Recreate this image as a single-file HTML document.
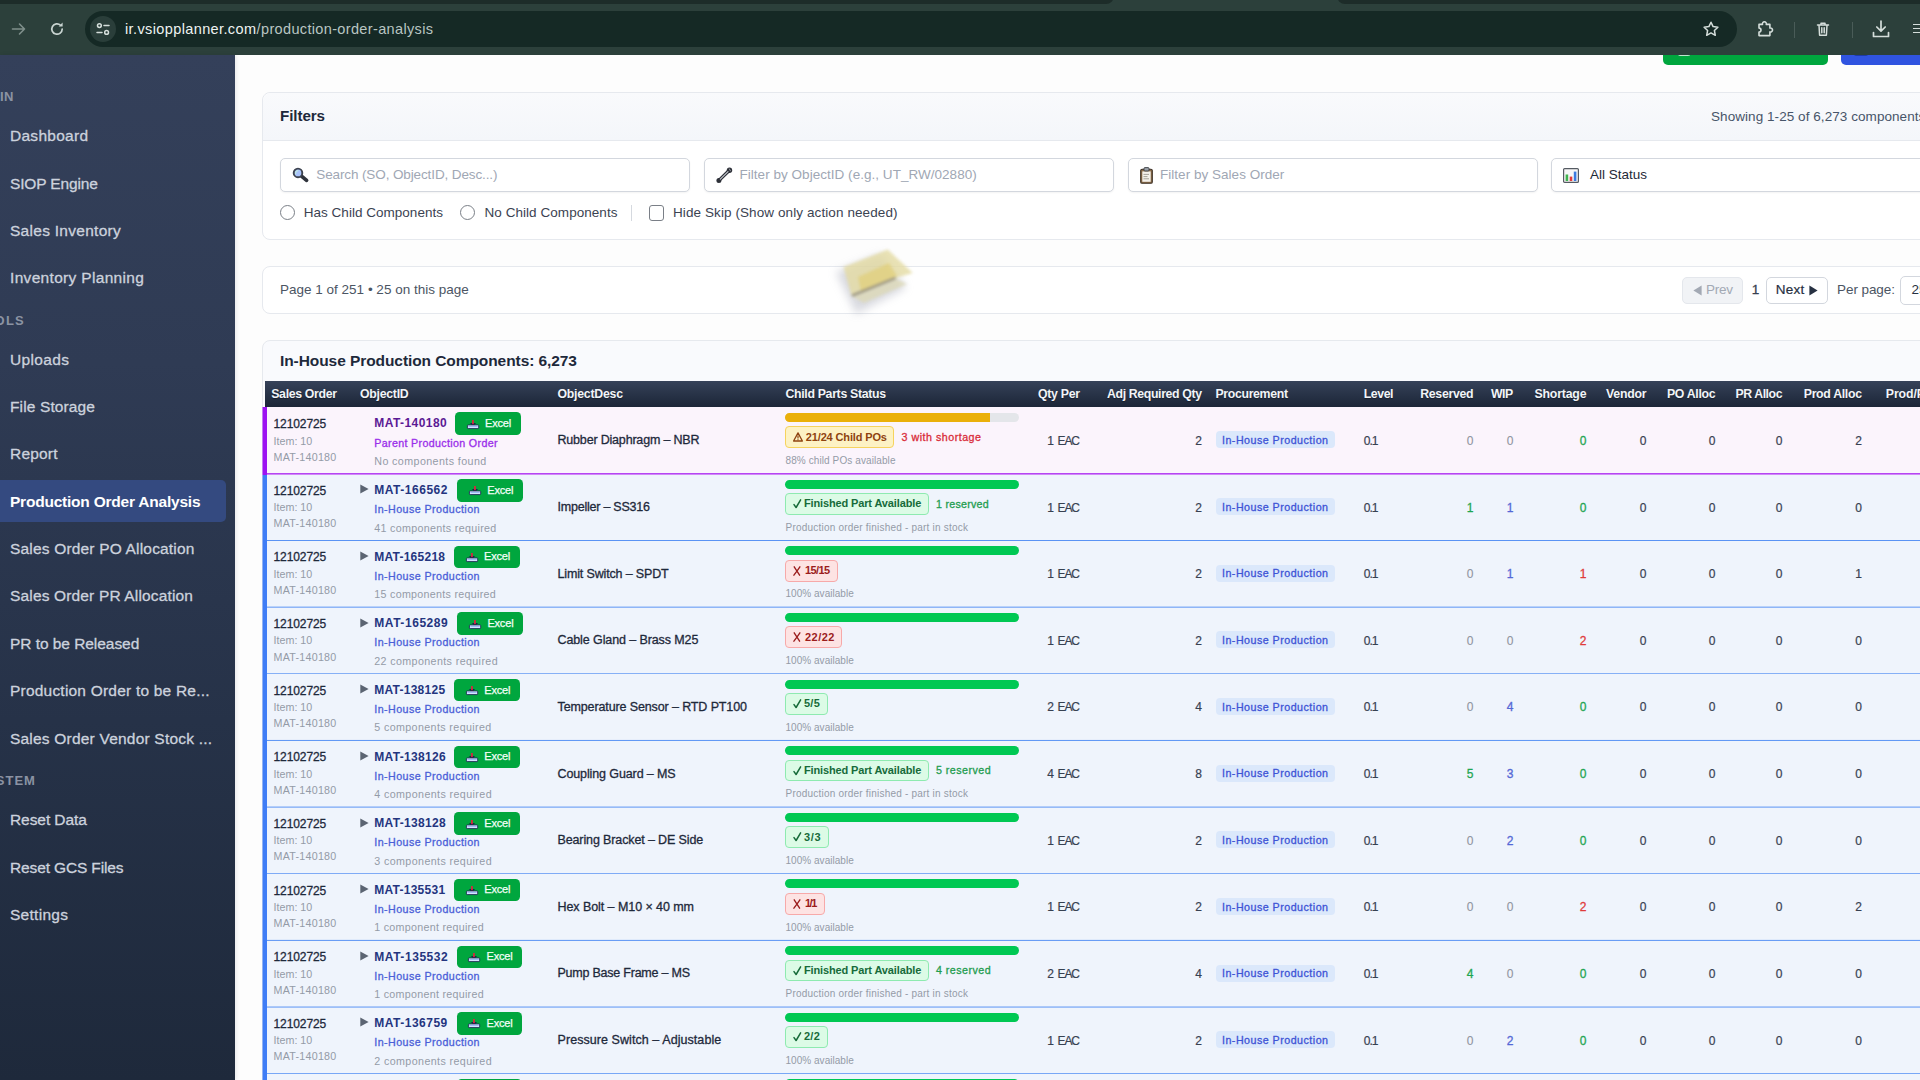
<!DOCTYPE html>
<html lang="en"><head><meta charset="utf-8"><title>Production Order Analysis</title>
<style>
html,body{margin:0;padding:0;width:1920px;height:1080px;overflow:hidden;}
body{position:relative;background:#fdfdfd;font-family:"Liberation Sans", sans-serif;}
#root{position:absolute;left:0;top:0;width:1920px;height:1080px;overflow:hidden;background:#fdfdfd;}
.t{position:absolute;white-space:pre;display:block;}
.b{position:absolute;box-sizing:border-box;}
svg{position:absolute;overflow:visible;}
</style></head>
<body>
<div id="root">
<div class="b" style="left:1663.00px;top:40.00px;width:164.75px;height:25.20px;background:#00a63e;border-radius:5px;"></div>
<div class="b" style="left:1840.75px;top:40.00px;width:100.00px;height:25.20px;background:#3054e0;border-radius:5px;"></div>
<div class="b" style="left:1677.50px;top:50.00px;width:12.50px;height:6.30px;background:rgba(255,255,255,.0);border:1.2px solid #bfe6cd;border-top:none;border-radius:0 0 2px 2px;"></div>
<div class="b" style="left:1854.00px;top:50.00px;width:14.00px;height:6.30px;background:#1d3aa8;border-radius:0 0 2px 2px;"></div>
<div class="b" style="left:0.00px;top:0.00px;width:1920.00px;height:54.50px;background:#2c403b;"></div>
<div class="b" style="left:-10.00px;top:-4.00px;width:1124.00px;height:7.50px;background:#1d2c29;border-radius:0 0 9px 9px;"></div>
<div class="b" style="left:1337.00px;top:-4.00px;width:600.00px;height:8.00px;background:#1d2c29;border-radius:0 0 0 9px;"></div>
<div class="b" style="left:85.00px;top:11.20px;width:1652.00px;height:35.80px;background:#152925;border-radius:18px;"></div>
<div class="b" style="left:90.00px;top:16.00px;width:26.00px;height:26.00px;background:#2a3e3a;border-radius:13px;"></div>
<svg style="left:11px;top:21px" width="16" height="16" viewBox="0 0 16 16"><path d="M1.5 8h12M8.5 3l5 5-5 5" fill="none" stroke="#7f8f8b" stroke-width="1.6" stroke-linecap="round" stroke-linejoin="round"/></svg>
<svg style="left:49px;top:21px" width="16" height="16" viewBox="0 0 16 16"><path d="M13.2 8a5.2 5.2 0 1 1-1.6-3.75" fill="none" stroke="#c9d4d1" stroke-width="1.7" stroke-linecap="round"/><path d="M13.6 1.6v4h-4z" fill="#c9d4d1"/></svg>
<svg style="left:96px;top:22px" width="14" height="14" viewBox="0 0 14 14"><g fill="none" stroke="#d5dedb" stroke-width="1.5" stroke-linecap="round"><circle cx="3.4" cy="3.6" r="1.9"/><path d="M8 3.6h5"/><circle cx="10.6" cy="10.4" r="1.9"/><path d="M1 10.4h5"/></g></svg>
<span class="t" style="left:125.00px;top:19.80px;font-size:14.5px;line-height:19px;color:#eef3f1;letter-spacing:0.382px;">ir.vsiopplanner.com</span>
<span class="t" style="left:256.60px;top:19.80px;font-size:14.5px;line-height:19px;color:#b9c5c2;letter-spacing:0.350px;">/production-order-analysis</span>
<svg style="left:1702px;top:20px" width="18" height="18" viewBox="0 0 18 18"><path d="M9 2.2l2.1 4.4 4.8.6-3.5 3.3.9 4.8L9 12.9l-4.3 2.4.9-4.8-3.5-3.3 4.8-.6z" fill="none" stroke="#d5dedb" stroke-width="1.5" stroke-linejoin="round"/></svg>
<svg style="left:1756.5px;top:18.5px" width="18" height="19" viewBox="0 0 18 19"><path d="M2 5.4h3.5a2 2 0 1 1 3.8 0h3.6v3.7a2 2 0 1 1 0 3.8v3.7H2v-3.5a2 2 0 1 0 0-4z" fill="none" stroke="#d5dedb" stroke-width="1.6" stroke-linejoin="round"/></svg>
<div class="b" style="left:1794.00px;top:21.50px;width:1.20px;height:16.00px;background:#4a5c58;"></div>
<svg style="left:1814px;top:20px" width="18" height="18" viewBox="0 0 18 18"><g fill="none" stroke="#d5dedb" stroke-width="1.5" stroke-linejoin="round" stroke-linecap="round"><path d="M3.5 5h11M7 5V3.2h4V5M5 5l.6 10.3h6.8L13 5"/><path d="M7.8 7.8v5M10.2 7.8v5"/></g></svg>
<div class="b" style="left:1852.00px;top:21.50px;width:1.20px;height:16.00px;background:#4a5c58;"></div>
<svg style="left:1872px;top:19px" width="18" height="20" viewBox="0 0 18 20"><g fill="none" stroke="#d5dedb" stroke-width="1.7" stroke-linejoin="round" stroke-linecap="round"><path d="M9 2v10M4.8 8l4.2 4.2L13.2 8"/><path d="M1.5 13.5v4h15v-4"/></g></svg>
<div class="b" style="left:1912.50px;top:23.50px;width:8.00px;height:1.60px;background:#d5dedb;"></div>
<div class="b" style="left:1912.50px;top:27.60px;width:8.00px;height:1.60px;background:#d5dedb;"></div>
<div class="b" style="left:1912.50px;top:31.70px;width:8.00px;height:1.60px;background:#d5dedb;"></div>
<div class="b" style="left:0.00px;top:54.50px;width:234.60px;height:1025.50px;background:linear-gradient(180deg,#34405a 0%,#2f3b54 30%,#263248 65%,#1e293b 100%);box-shadow:1px 0 4px rgba(15,23,42,.10);"></div>
<span class="t" style="left:0.10px;top:87.70px;font-size:13px;line-height:17px;color:#8b93a3;font-weight:700;letter-spacing:0.390px;">IN</span>
<span class="t" style="left:-5.50px;top:311.60px;font-size:13px;line-height:17px;color:#8b93a3;font-weight:700;letter-spacing:1.283px;">OLS</span>
<span class="t" style="left:-4.20px;top:771.80px;font-size:13px;line-height:17px;color:#8b93a3;font-weight:700;letter-spacing:0.992px;">STEM</span>
<div class="b" style="left:-6.00px;top:480.30px;width:231.50px;height:42.20px;background:#344a80;border-radius:5px;"></div>
<span class="t" style="left:10.00px;top:124.90px;font-size:15.5px;line-height:21px;color:#ccd2dd;letter-spacing:0.271px;-webkit-text-stroke:0.3px #ccd2dd;">Dashboard</span>
<span class="t" style="left:10.00px;top:172.50px;font-size:15.5px;line-height:21px;color:#ccd2dd;letter-spacing:-0.154px;-webkit-text-stroke:0.3px #ccd2dd;">SIOP Engine</span>
<span class="t" style="left:10.00px;top:219.90px;font-size:15.5px;line-height:21px;color:#ccd2dd;letter-spacing:0.283px;-webkit-text-stroke:0.3px #ccd2dd;">Sales Inventory</span>
<span class="t" style="left:10.00px;top:267.10px;font-size:15.5px;line-height:21px;color:#ccd2dd;letter-spacing:0.324px;-webkit-text-stroke:0.3px #ccd2dd;">Inventory Planning</span>
<span class="t" style="left:10.00px;top:348.90px;font-size:15.5px;line-height:21px;color:#ccd2dd;letter-spacing:0.338px;-webkit-text-stroke:0.3px #ccd2dd;">Uploads</span>
<span class="t" style="left:10.00px;top:396.20px;font-size:15.5px;line-height:21px;color:#ccd2dd;letter-spacing:0.129px;-webkit-text-stroke:0.3px #ccd2dd;">File Storage</span>
<span class="t" style="left:10.00px;top:443.40px;font-size:15.5px;line-height:21px;color:#ccd2dd;letter-spacing:0.194px;-webkit-text-stroke:0.3px #ccd2dd;">Report</span>
<span class="t" style="left:10.00px;top:537.80px;font-size:15.5px;line-height:21px;color:#ccd2dd;letter-spacing:0.181px;-webkit-text-stroke:0.3px #ccd2dd;">Sales Order PO Allocation</span>
<span class="t" style="left:10.00px;top:585.00px;font-size:15.5px;line-height:21px;color:#ccd2dd;letter-spacing:0.158px;-webkit-text-stroke:0.3px #ccd2dd;">Sales Order PR Allocation</span>
<span class="t" style="left:10.00px;top:632.90px;font-size:15.5px;line-height:21px;color:#ccd2dd;letter-spacing:-0.051px;-webkit-text-stroke:0.3px #ccd2dd;">PR to be Released</span>
<span class="t" style="left:10.00px;top:680.20px;font-size:15.5px;line-height:21px;color:#ccd2dd;letter-spacing:0.209px;-webkit-text-stroke:0.3px #ccd2dd;">Production Order to be Re...</span>
<span class="t" style="left:10.00px;top:727.50px;font-size:15.5px;line-height:21px;color:#ccd2dd;letter-spacing:0.206px;-webkit-text-stroke:0.3px #ccd2dd;">Sales Order Vendor Stock ...</span>
<span class="t" style="left:10.00px;top:808.80px;font-size:15.5px;line-height:21px;color:#ccd2dd;letter-spacing:-0.072px;-webkit-text-stroke:0.3px #ccd2dd;">Reset Data</span>
<span class="t" style="left:10.00px;top:856.50px;font-size:15.5px;line-height:21px;color:#ccd2dd;letter-spacing:-0.137px;-webkit-text-stroke:0.3px #ccd2dd;">Reset GCS Files</span>
<span class="t" style="left:10.00px;top:903.80px;font-size:15.5px;line-height:21px;color:#ccd2dd;letter-spacing:0.283px;-webkit-text-stroke:0.3px #ccd2dd;">Settings</span>
<span class="t" style="left:10.00px;top:490.50px;font-size:15.5px;line-height:21px;color:#ffffff;font-weight:700;letter-spacing:-0.221px;">Production Order Analysis</span>
<div class="b" style="left:262.00px;top:91.60px;width:1700.00px;height:148.20px;background:#ffffff;border:1px solid #e6e9ee;border-radius:8px;"></div>
<div class="b" style="left:263.00px;top:92.60px;width:1700.00px;height:48.00px;background:linear-gradient(180deg,#f9fafc,#f4f6fa);border-bottom:1px solid #e6e9ee;border-radius:8px 0 0 0;"></div>
<span class="t" style="left:280.00px;top:106.40px;font-size:15.2px;line-height:20px;color:#1e293b;font-weight:700;letter-spacing:-0.096px;">Filters</span>
<span class="t" style="left:1711.00px;top:107.50px;font-size:13.5px;line-height:18px;color:#475569;letter-spacing:0.061px;">Showing 1-25 of 6,273 components</span>
<div class="b" style="left:280.00px;top:158.00px;width:410.30px;height:33.70px;background:#ffffff;border:1px solid #d3d7de;border-radius:5px;box-shadow:0 1px 2px rgba(0,0,0,.05);"></div>
<div class="b" style="left:704.00px;top:158.00px;width:410.30px;height:33.70px;background:#ffffff;border:1px solid #d3d7de;border-radius:5px;box-shadow:0 1px 2px rgba(0,0,0,.05);"></div>
<div class="b" style="left:1127.50px;top:158.00px;width:410.30px;height:33.70px;background:#ffffff;border:1px solid #d3d7de;border-radius:5px;box-shadow:0 1px 2px rgba(0,0,0,.05);"></div>
<div class="b" style="left:1550.50px;top:158.00px;width:420.00px;height:33.70px;background:#ffffff;border:1px solid #d3d7de;border-radius:5px;box-shadow:0 1px 2px rgba(0,0,0,.05);"></div>
<span class="t" style="left:316.25px;top:166.00px;font-size:13.5px;line-height:18px;color:#a0a7b4;letter-spacing:-0.114px;">Search (SO, ObjectID, Desc...)</span>
<span class="t" style="left:739.50px;top:166.00px;font-size:13.5px;line-height:18px;color:#a0a7b4;letter-spacing:0.031px;">Filter by ObjectID (e.g., UT_RW/02880)</span>
<span class="t" style="left:1160.00px;top:166.00px;font-size:13.5px;line-height:18px;color:#a0a7b4;letter-spacing:0.025px;">Filter by Sales Order</span>
<span class="t" style="left:1590.00px;top:166.20px;font-size:13.5px;line-height:18px;color:#1f2937;">All Status</span>
<svg style="left:291.5px;top:167px" width="17" height="16" viewBox="0 0 17 16"><path d="M9.2 8.8l5.4 4.6" stroke="#2f333c" stroke-width="3.7" stroke-linecap="round"/><circle cx="6" cy="5.9" r="4.3" fill="#a9c3fa" stroke="#3d434f" stroke-width="1.9"/><path d="M3.6 6.6a2.6 2.6 0 0 1 2.2-3" stroke="#bfe9e0" stroke-width="1.2" fill="none" stroke-linecap="round"/></svg>
<svg style="left:715.5px;top:167px" width="17" height="16" viewBox="0 0 17 16"><path d="M3 13.4L13.4 3.3" stroke="#2d3038" stroke-width="3.4" stroke-linecap="round"/><circle cx="13.5" cy="3.3" r="2.7" fill="#2d3038"/><circle cx="2.9" cy="13.4" r="2.5" fill="#2d3038"/><path d="M4.3 12.1L12 4.7" stroke="#c4c7cd" stroke-width="1.1" stroke-linecap="round"/><path d="M13.2 1.6l1.4 2.6" stroke="#9a9ea6" stroke-width="1"/></svg>
<svg style="left:1139.5px;top:166.5px" width="13" height="17" viewBox="0 0 13 17"><rect x="0.7" y="2.2" width="11.6" height="14.1" rx="1.4" fill="#8d6e4a" stroke="#3b2f25" stroke-width="1.1"/><rect x="2.3" y="4.4" width="8.4" height="10.4" fill="#f4f1ea"/><rect x="4" y="0.6" width="5" height="3.4" rx="0.9" fill="#9aa0a8" stroke="#3c3f44" stroke-width="0.9"/><path d="M3.5 7.4h5.5M3.5 9.6h4M3.5 11.8h5.5" stroke="#9c9890" stroke-width="0.9"/></svg>
<svg style="left:1562.5px;top:167.5px" width="16" height="15" viewBox="0 0 16 15"><rect x="0.6" y="0.6" width="14.8" height="13.8" rx="1" fill="#f7f7f7" stroke="#555a62" stroke-width="1.2"/><rect x="2.6" y="6.5" width="2.6" height="6.5" fill="#3fb34f"/><rect x="6.7" y="8.6" width="2.6" height="4.4" fill="#e23c3c"/><rect x="10.8" y="3.6" width="2.6" height="9.4" fill="#3b7be0"/></svg>
<div class="b" style="left:280.00px;top:205.25px;width:15.00px;height:15.00px;background:#ffffff;border:1.4px solid #7a7f87;border-radius:50%;"></div>
<span class="t" style="left:303.75px;top:203.75px;font-size:13.5px;line-height:18px;color:#3b4352;letter-spacing:0.022px;">Has Child Components</span>
<div class="b" style="left:460.25px;top:205.25px;width:15.00px;height:15.00px;background:#ffffff;border:1.4px solid #7a7f87;border-radius:50%;"></div>
<span class="t" style="left:484.50px;top:203.75px;font-size:13.5px;line-height:18px;color:#3b4352;letter-spacing:0.051px;">No Child Components</span>
<div class="b" style="left:630.60px;top:204.50px;width:1.20px;height:16.50px;background:#d5d9df;"></div>
<div class="b" style="left:648.75px;top:205.40px;width:15.20px;height:15.20px;background:#ffffff;border:1.4px solid #7a7f87;border-radius:3px;"></div>
<span class="t" style="left:673.00px;top:203.75px;font-size:13.5px;line-height:18px;color:#3b4352;letter-spacing:0.091px;">Hide Skip (Show only action needed)</span>
<div class="b" style="left:262.00px;top:266.00px;width:1700.00px;height:48.00px;background:#ffffff;border:1px solid #e6e9ee;border-radius:8px;"></div>
<span class="t" style="left:280.00px;top:281.00px;font-size:13.5px;line-height:18px;color:#4b5563;letter-spacing:0.004px;">Page 1 of 251 • 25 on this page</span>
<div class="b" style="left:1681.75px;top:276.50px;width:60.75px;height:27.60px;background:#f1f3f6;border:1px solid #e4e7ec;border-radius:5px;"></div>
<svg style="left:1692.5px;top:285px" width="9" height="11" viewBox="0 0 9 11"><path d="M8.6 0.6v9.8L0.4 5.5z" fill="#a3a9b4"/></svg>
<span class="t" style="left:1706.00px;top:281.20px;font-size:13.5px;line-height:18px;color:#a3a9b4;letter-spacing:-0.255px;">Prev</span>
<span class="t" style="left:1751.80px;top:281.20px;font-size:13.5px;line-height:18px;color:#374151;-webkit-text-stroke:0.3px #374151;">1</span>
<div class="b" style="left:1765.50px;top:276.50px;width:62.00px;height:27.60px;background:#ffffff;border:1px solid #d3d7de;border-radius:5px;"></div>
<span class="t" style="left:1775.75px;top:281.20px;font-size:13.5px;line-height:18px;color:#273142;letter-spacing:0.245px;-webkit-text-stroke:0.2px #273142;">Next</span>
<svg style="left:1808.5px;top:285px" width="9" height="11" viewBox="0 0 9 11"><path d="M0.4 0.6v9.8L8.6 5.5z" fill="#273142"/></svg>
<span class="t" style="left:1837.00px;top:281.20px;font-size:13.5px;line-height:18px;color:#4b5563;letter-spacing:-0.068px;">Per page:</span>
<div class="b" style="left:1900.00px;top:275.50px;width:60.00px;height:29.00px;background:#ffffff;border:1px solid #d3d7de;border-radius:5px;"></div>
<span class="t" style="left:1911.50px;top:281.20px;font-size:13.5px;line-height:18px;color:#273142;">25</span>
<div class="b" style="left:262.00px;top:340.00px;width:1700.00px;height:800.00px;background:linear-gradient(180deg,#f9fafd 0px,#f9fafd 41px,#fcfcfd 41px);border:1px solid #e6e9ee;border-radius:8px 0 0 0;"></div>
<span class="t" style="left:280.00px;top:349.70px;font-size:15.5px;line-height:21px;color:#1e293b;font-weight:700;letter-spacing:-0.075px;">In-House Production Components: 6,273</span>
<div class="b" style="left:265.00px;top:380.80px;width:1700.00px;height:26.60px;background:linear-gradient(180deg,#364259 0%,#273246 55%,#1c2638 100%);"></div>
<span class="t" style="left:271.25px;top:386.30px;font-size:12.3px;line-height:16px;color:#f1f4f8;font-weight:700;letter-spacing:-0.330px;text-shadow:0 1px 1px rgba(0,0,0,.35);">Sales Order</span>
<span class="t" style="left:360.00px;top:386.30px;font-size:12.3px;line-height:16px;color:#f1f4f8;font-weight:700;letter-spacing:-0.261px;text-shadow:0 1px 1px rgba(0,0,0,.35);">ObjectID</span>
<span class="t" style="left:557.50px;top:386.30px;font-size:12.3px;line-height:16px;color:#f1f4f8;font-weight:700;letter-spacing:-0.241px;text-shadow:0 1px 1px rgba(0,0,0,.35);">ObjectDesc</span>
<span class="t" style="left:785.50px;top:386.30px;font-size:12.3px;line-height:16px;color:#f1f4f8;font-weight:700;letter-spacing:-0.319px;text-shadow:0 1px 1px rgba(0,0,0,.35);">Child Parts Status</span>
<span class="t" style="left:1038.00px;top:386.30px;font-size:12.3px;line-height:16px;color:#f1f4f8;font-weight:700;letter-spacing:-0.292px;text-shadow:0 1px 1px rgba(0,0,0,.35);">Qty Per</span>
<span class="t" style="left:1107.00px;top:386.30px;font-size:12.3px;line-height:16px;color:#f1f4f8;font-weight:700;letter-spacing:-0.362px;text-shadow:0 1px 1px rgba(0,0,0,.35);">Adj Required Qty</span>
<span class="t" style="left:1215.50px;top:386.30px;font-size:12.3px;line-height:16px;color:#f1f4f8;font-weight:700;letter-spacing:-0.336px;text-shadow:0 1px 1px rgba(0,0,0,.35);">Procurement</span>
<span class="t" style="left:1363.75px;top:386.30px;font-size:12.3px;line-height:16px;color:#f1f4f8;font-weight:700;letter-spacing:-0.426px;text-shadow:0 1px 1px rgba(0,0,0,.35);">Level</span>
<span class="t" style="left:1420.25px;top:386.30px;font-size:12.3px;line-height:16px;color:#f1f4f8;font-weight:700;letter-spacing:-0.304px;text-shadow:0 1px 1px rgba(0,0,0,.35);">Reserved</span>
<span class="t" style="left:1491.00px;top:386.30px;font-size:12.3px;line-height:16px;color:#f1f4f8;font-weight:700;letter-spacing:-0.492px;text-shadow:0 1px 1px rgba(0,0,0,.35);">WIP</span>
<span class="t" style="left:1534.50px;top:386.30px;font-size:12.3px;line-height:16px;color:#f1f4f8;font-weight:700;letter-spacing:-0.185px;text-shadow:0 1px 1px rgba(0,0,0,.35);">Shortage</span>
<span class="t" style="left:1606.00px;top:386.30px;font-size:12.3px;line-height:16px;color:#f1f4f8;font-weight:700;letter-spacing:-0.237px;text-shadow:0 1px 1px rgba(0,0,0,.35);">Vendor</span>
<span class="t" style="left:1667.00px;top:386.30px;font-size:12.3px;line-height:16px;color:#f1f4f8;font-weight:700;letter-spacing:-0.328px;text-shadow:0 1px 1px rgba(0,0,0,.35);">PO Alloc</span>
<span class="t" style="left:1735.50px;top:386.30px;font-size:12.3px;line-height:16px;color:#f1f4f8;font-weight:700;letter-spacing:-0.444px;text-shadow:0 1px 1px rgba(0,0,0,.35);">PR Alloc</span>
<span class="t" style="left:1803.75px;top:386.30px;font-size:12.3px;line-height:16px;color:#f1f4f8;font-weight:700;letter-spacing:-0.311px;text-shadow:0 1px 1px rgba(0,0,0,.35);">Prod Alloc</span>
<span class="t" style="left:1885.75px;top:386.30px;font-size:12.3px;line-height:16px;color:#f1f4f8;font-weight:700;letter-spacing:-0.068px;text-shadow:0 1px 1px rgba(0,0,0,.35);">Prod/PR Alloc</span>
<div class="b" style="left:263.00px;top:407.33px;width:1700.00px;height:67.34px;background:#fbf4fc;"></div>
<div class="b" style="left:263.00px;top:407.33px;width:4.00px;height:67.34px;background:#9d12f2;"></div>
<div class="b" style="left:262.00px;top:407.33px;width:1.00px;height:67.34px;background:#9d12f2;opacity:.5;"></div>
<div class="b" style="left:267.00px;top:473.00px;width:1700.00px;height:1.00px;background:#b545f3;"></div>
<div class="b" style="left:267.00px;top:474.00px;width:1700.00px;height:1.00px;background:#b545f3;opacity:.62;"></div>
<span class="t" style="left:273.50px;top:416.00px;font-size:12px;line-height:16px;color:#1e293b;letter-spacing:-0.092px;-webkit-text-stroke:0.3px #1e293b;">12102725</span>
<span class="t" style="left:273.50px;top:433.50px;font-size:10.7px;line-height:14px;color:#949ba7;letter-spacing:0.025px;">Item: 10</span>
<span class="t" style="left:273.50px;top:449.55px;font-size:10.7px;line-height:14px;color:#949ba7;letter-spacing:0.260px;">MAT-140180</span>
<span class="t" style="left:374.25px;top:415.30px;font-size:12px;line-height:16px;color:#5b1a94;font-weight:700;letter-spacing:0.446px;">MAT-140180</span>
<div class="b" style="left:455.00px;top:412.35px;width:65.50px;height:22.35px;background:#00a63e;border-radius:4.5px;"></div>
<svg style="left:466.80px;top:419.60px" width="12.1" height="9.3" viewBox="0 0 13 10"><path d="M3.0 3.3h6.8L6.4 6.4z" fill="#18224e"/><rect x="5.45" y="0" width="1.9" height="4.7" fill="#d9263f"/><rect x="0.45" y="5.35" width="12.1" height="3.9" rx="0.8" fill="#d4e3ff" stroke="#18224e" stroke-width="0.9"/><rect x="1.6" y="6.3" width="9.8" height="1.2" fill="#9dbcf5"/></svg>
<span class="t" style="left:485.00px;top:415.90px;font-size:11px;line-height:15px;color:#f4fff8;letter-spacing:-0.177px;-webkit-text-stroke:0.25px #f4fff8;">Excel</span>
<span class="t" style="left:374.25px;top:435.50px;font-size:10.7px;line-height:14px;color:#9a2eea;letter-spacing:0.337px;-webkit-text-stroke:0.3px #9a2eea;">Parent Production Order</span>
<span class="t" style="left:374.25px;top:453.80px;font-size:10.7px;line-height:14px;color:#949ba7;letter-spacing:0.412px;">No components found</span>
<span class="t" style="left:557.50px;top:432.25px;font-size:12.5px;line-height:17px;color:#1e293b;letter-spacing:-0.186px;-webkit-text-stroke:0.3px #1e293b;">Rubber Diaphragm – NBR</span>
<div class="b" style="left:785.00px;top:412.90px;width:233.80px;height:9.00px;background:#e4e6ea;border-radius:4.5px;overflow:hidden;"><div style="width:87.7%;height:100%;background:#eab00a;"></div></div>
<div class="b" style="left:785.20px;top:426.30px;width:109.30px;height:21.90px;background:#fdf2c4;border:1px solid #f6d35e;border-radius:4px;"></div>
<svg style="left:793px;top:431.90px" width="10" height="10" viewBox="0 0 10 10"><path d="M5 0.9L9.4 9H0.6z" fill="none" stroke="#8f4310" stroke-width="1.3" stroke-linejoin="round"/><path d="M5 3.6v2.8M5 7.3v0.9" stroke="#8f4310" stroke-width="1.2"/></svg>
<span class="t" style="left:805.75px;top:429.60px;font-size:11px;line-height:15px;color:#8f4310;font-weight:700;letter-spacing:-0.136px;">21/24 Child POs</span>
<span class="t" style="left:901.50px;top:430.10px;font-size:10.7px;line-height:14px;color:#d92c3a;letter-spacing:0.501px;-webkit-text-stroke:0.3px #d92c3a;">3 with shortage</span>
<span class="t" style="left:785.50px;top:454.10px;font-size:10px;line-height:14px;color:#949ba7;letter-spacing:0.098px;">88% child POs available</span>
<span class="t" style="left:1057.50px;top:432.70px;font-size:12px;line-height:16px;color:#374151;letter-spacing:-1.094px;-webkit-text-stroke:0.2px #374151;">EAC</span>
<span class="t" style="left:1047.31px;top:432.70px;font-size:12px;line-height:16px;color:#374151;-webkit-text-stroke:0.2px #374151;">1</span>
<span class="t" style="left:1195.31px;top:432.70px;font-size:12px;line-height:16px;color:#374151;-webkit-text-stroke:0.2px #374151;">2</span>

<div class="b" style="left:1215.50px;top:431.30px;width:119.30px;height:17.20px;background:#dbe8fb;border-radius:4px;"></div>
<span class="t" style="left:1222.00px;top:433.10px;font-size:10.7px;line-height:14px;color:#3d53d6;letter-spacing:0.476px;-webkit-text-stroke:0.3px #3d53d6;">In-House Production</span>
<span class="t" style="left:1363.75px;top:432.70px;font-size:12px;line-height:16px;color:#374151;letter-spacing:-0.969px;-webkit-text-stroke:0.2px #374151;">0.1</span>
<span class="t" style="left:1466.81px;top:432.70px;font-size:12px;line-height:16px;color:#8f959f;-webkit-text-stroke:0.1px #8f959f;">0</span>
<span class="t" style="left:1506.81px;top:432.70px;font-size:12px;line-height:16px;color:#8f959f;-webkit-text-stroke:0.1px #8f959f;">0</span>
<span class="t" style="left:1579.81px;top:432.70px;font-size:12px;line-height:16px;color:#1fa653;-webkit-text-stroke:0.3px #1fa653;">0</span>
<span class="t" style="left:1639.81px;top:432.70px;font-size:12px;line-height:16px;color:#374151;-webkit-text-stroke:0.2px #374151;">0</span>
<span class="t" style="left:1708.81px;top:432.70px;font-size:12px;line-height:16px;color:#374151;-webkit-text-stroke:0.2px #374151;">0</span>
<span class="t" style="left:1775.81px;top:432.70px;font-size:12px;line-height:16px;color:#374151;-webkit-text-stroke:0.2px #374151;">0</span>
<span class="t" style="left:1855.31px;top:432.70px;font-size:12px;line-height:16px;color:#374151;-webkit-text-stroke:0.2px #374151;">2</span>
<div class="b" style="left:263.00px;top:474.67px;width:1700.00px;height:66.33px;background:#eff4fc;"></div>
<div class="b" style="left:263.00px;top:474.67px;width:4.00px;height:66.33px;background:#3f7df6;"></div>
<div class="b" style="left:262.00px;top:474.67px;width:1.00px;height:66.33px;background:#3f7df6;opacity:.5;"></div>
<div class="b" style="left:267.00px;top:540.00px;width:1700.00px;height:1.00px;background:#5a93f4;opacity:1.00;"></div>
<span class="t" style="left:273.50px;top:482.84px;font-size:12px;line-height:16px;color:#1e293b;letter-spacing:-0.092px;-webkit-text-stroke:0.3px #1e293b;">12102725</span>
<span class="t" style="left:273.50px;top:500.34px;font-size:10.7px;line-height:14px;color:#949ba7;letter-spacing:0.025px;">Item: 10</span>
<span class="t" style="left:273.50px;top:516.38px;font-size:10.7px;line-height:14px;color:#949ba7;letter-spacing:0.260px;">MAT-140180</span>
<svg style="left:360px;top:484.44px" width="9" height="10" viewBox="0 0 9 10"><path d="M0.3 0.4v9.2L8.6 5z" fill="#5b6472"/></svg>
<span class="t" style="left:374.25px;top:482.14px;font-size:12px;line-height:16px;color:#24357f;font-weight:700;letter-spacing:0.530px;">MAT-166562</span>
<div class="b" style="left:457.25px;top:479.19px;width:65.50px;height:22.35px;background:#00a63e;border-radius:4.5px;"></div>
<svg style="left:469.05px;top:486.44px" width="12.1" height="9.3" viewBox="0 0 13 10"><path d="M3.0 3.3h6.8L6.4 6.4z" fill="#18224e"/><rect x="5.45" y="0" width="1.9" height="4.7" fill="#d9263f"/><rect x="0.45" y="5.35" width="12.1" height="3.9" rx="0.8" fill="#d4e3ff" stroke="#18224e" stroke-width="0.9"/><rect x="1.6" y="6.3" width="9.8" height="1.2" fill="#9dbcf5"/></svg>
<span class="t" style="left:487.25px;top:482.74px;font-size:11px;line-height:15px;color:#f4fff8;letter-spacing:-0.177px;-webkit-text-stroke:0.25px #f4fff8;">Excel</span>
<span class="t" style="left:374.25px;top:502.34px;font-size:10.7px;line-height:14px;color:#4a5fd8;letter-spacing:0.434px;-webkit-text-stroke:0.3px #4a5fd8;">In-House Production</span>
<span class="t" style="left:374.25px;top:520.63px;font-size:10.7px;line-height:14px;color:#949ba7;letter-spacing:0.321px;">41 components required</span>
<span class="t" style="left:557.50px;top:499.09px;font-size:12.5px;line-height:17px;color:#1e293b;letter-spacing:-0.226px;-webkit-text-stroke:0.3px #1e293b;">Impeller – SS316</span>
<div class="b" style="left:785.00px;top:479.74px;width:233.80px;height:9.00px;background:#00c853;border-radius:4.5px;"></div>
<div class="b" style="left:785.20px;top:493.14px;width:144.30px;height:21.90px;background:#dcfbe6;border:1px solid #8eeab0;border-radius:4px;"></div>
<svg style="left:793px;top:499.34px" width="9" height="10" viewBox="0 0 9 10"><path d="M1 5.6l2.1 2.9L7.6 0.9" fill="none" stroke="#176b3a" stroke-width="1.5" stroke-linecap="round" stroke-linejoin="round"/></svg>
<span class="t" style="left:803.90px;top:496.44px;font-size:11px;line-height:15px;color:#176b3a;font-weight:700;letter-spacing:-0.129px;">Finished Part Available</span>
<span class="t" style="left:936.00px;top:496.94px;font-size:10.7px;line-height:14px;color:#1f9d50;letter-spacing:0.250px;-webkit-text-stroke:0.3px #1f9d50;">1 reserved</span>
<span class="t" style="left:785.50px;top:520.94px;font-size:10px;line-height:14px;color:#949ba7;letter-spacing:0.213px;">Production order finished - part in stock</span>
<span class="t" style="left:1057.50px;top:499.54px;font-size:12px;line-height:16px;color:#374151;letter-spacing:-1.094px;-webkit-text-stroke:0.2px #374151;">EAC</span>
<span class="t" style="left:1047.31px;top:499.54px;font-size:12px;line-height:16px;color:#374151;-webkit-text-stroke:0.2px #374151;">1</span>
<span class="t" style="left:1195.31px;top:499.54px;font-size:12px;line-height:16px;color:#374151;-webkit-text-stroke:0.2px #374151;">2</span>

<div class="b" style="left:1215.50px;top:498.14px;width:119.30px;height:17.20px;background:#dbe8fb;border-radius:4px;"></div>
<span class="t" style="left:1222.00px;top:499.94px;font-size:10.7px;line-height:14px;color:#3d53d6;letter-spacing:0.476px;-webkit-text-stroke:0.3px #3d53d6;">In-House Production</span>
<span class="t" style="left:1363.75px;top:499.54px;font-size:12px;line-height:16px;color:#374151;letter-spacing:-0.969px;-webkit-text-stroke:0.2px #374151;">0.1</span>
<span class="t" style="left:1466.81px;top:499.54px;font-size:12px;line-height:16px;color:#1fa653;-webkit-text-stroke:0.3px #1fa653;">1</span>
<span class="t" style="left:1506.81px;top:499.54px;font-size:12px;line-height:16px;color:#5468d6;-webkit-text-stroke:0.3px #5468d6;">1</span>
<span class="t" style="left:1579.81px;top:499.54px;font-size:12px;line-height:16px;color:#1fa653;-webkit-text-stroke:0.3px #1fa653;">0</span>
<span class="t" style="left:1639.81px;top:499.54px;font-size:12px;line-height:16px;color:#374151;-webkit-text-stroke:0.2px #374151;">0</span>
<span class="t" style="left:1708.81px;top:499.54px;font-size:12px;line-height:16px;color:#374151;-webkit-text-stroke:0.2px #374151;">0</span>
<span class="t" style="left:1775.81px;top:499.54px;font-size:12px;line-height:16px;color:#374151;-webkit-text-stroke:0.2px #374151;">0</span>
<span class="t" style="left:1855.31px;top:499.54px;font-size:12px;line-height:16px;color:#374151;-webkit-text-stroke:0.2px #374151;">0</span>
<div class="b" style="left:263.00px;top:541.00px;width:1700.00px;height:66.65px;background:#eff4fc;"></div>
<div class="b" style="left:263.00px;top:541.00px;width:4.00px;height:66.65px;background:#3f7df6;"></div>
<div class="b" style="left:262.00px;top:541.00px;width:1.00px;height:66.65px;background:#3f7df6;opacity:.5;"></div>
<div class="b" style="left:267.00px;top:606.00px;width:1700.00px;height:1.00px;background:#5a93f4;opacity:0.35;"></div>
<div class="b" style="left:267.00px;top:607.00px;width:1700.00px;height:1.00px;background:#5a93f4;opacity:0.65;"></div>
<span class="t" style="left:273.50px;top:549.33px;font-size:12px;line-height:16px;color:#1e293b;letter-spacing:-0.092px;-webkit-text-stroke:0.3px #1e293b;">12102725</span>
<span class="t" style="left:273.50px;top:566.83px;font-size:10.7px;line-height:14px;color:#949ba7;letter-spacing:0.025px;">Item: 10</span>
<span class="t" style="left:273.50px;top:582.88px;font-size:10.7px;line-height:14px;color:#949ba7;letter-spacing:0.260px;">MAT-140180</span>
<svg style="left:360px;top:550.93px" width="9" height="10" viewBox="0 0 9 10"><path d="M0.3 0.4v9.2L8.6 5z" fill="#5b6472"/></svg>
<span class="t" style="left:374.25px;top:548.62px;font-size:12px;line-height:16px;color:#24357f;font-weight:700;letter-spacing:0.252px;">MAT-165218</span>
<div class="b" style="left:454.00px;top:545.68px;width:65.50px;height:22.35px;background:#00a63e;border-radius:4.5px;"></div>
<svg style="left:465.80px;top:552.93px" width="12.1" height="9.3" viewBox="0 0 13 10"><path d="M3.0 3.3h6.8L6.4 6.4z" fill="#18224e"/><rect x="5.45" y="0" width="1.9" height="4.7" fill="#d9263f"/><rect x="0.45" y="5.35" width="12.1" height="3.9" rx="0.8" fill="#d4e3ff" stroke="#18224e" stroke-width="0.9"/><rect x="1.6" y="6.3" width="9.8" height="1.2" fill="#9dbcf5"/></svg>
<span class="t" style="left:484.00px;top:549.23px;font-size:11px;line-height:15px;color:#f4fff8;letter-spacing:-0.177px;-webkit-text-stroke:0.25px #f4fff8;">Excel</span>
<span class="t" style="left:374.25px;top:568.83px;font-size:10.7px;line-height:14px;color:#4a5fd8;letter-spacing:0.434px;-webkit-text-stroke:0.3px #4a5fd8;">In-House Production</span>
<span class="t" style="left:374.25px;top:587.12px;font-size:10.7px;line-height:14px;color:#949ba7;letter-spacing:0.297px;">15 components required</span>
<span class="t" style="left:557.50px;top:565.58px;font-size:12.5px;line-height:17px;color:#1e293b;letter-spacing:-0.148px;-webkit-text-stroke:0.3px #1e293b;">Limit Switch – SPDT</span>
<div class="b" style="left:785.00px;top:546.23px;width:233.80px;height:9.00px;background:#00c853;border-radius:4.5px;"></div>
<div class="b" style="left:785.20px;top:559.62px;width:52.55px;height:21.90px;background:#fde3e3;border:1px solid #f7a9a9;border-radius:4px;"></div>
<svg style="left:793.4px;top:565.83px" width="8" height="10" viewBox="0 0 8 10"><path d="M1.2 0.8L6.6 9.2M6.9 0.8C5 3.6 3 6.4 0.9 9.2" fill="none" stroke="#9b1c1c" stroke-width="1.35" stroke-linecap="round"/></svg>
<span class="t" style="left:805.00px;top:562.93px;font-size:11px;line-height:15px;color:#9b1c1c;font-weight:700;letter-spacing:-0.595px;">15/15</span>
<span class="t" style="left:785.50px;top:587.43px;font-size:10px;line-height:14px;color:#949ba7;letter-spacing:0.032px;">100% available</span>
<span class="t" style="left:1057.50px;top:566.03px;font-size:12px;line-height:16px;color:#374151;letter-spacing:-1.094px;-webkit-text-stroke:0.2px #374151;">EAC</span>
<span class="t" style="left:1047.31px;top:566.03px;font-size:12px;line-height:16px;color:#374151;-webkit-text-stroke:0.2px #374151;">1</span>
<span class="t" style="left:1195.31px;top:566.03px;font-size:12px;line-height:16px;color:#374151;-webkit-text-stroke:0.2px #374151;">2</span>

<div class="b" style="left:1215.50px;top:564.62px;width:119.30px;height:17.20px;background:#dbe8fb;border-radius:4px;"></div>
<span class="t" style="left:1222.00px;top:566.43px;font-size:10.7px;line-height:14px;color:#3d53d6;letter-spacing:0.476px;-webkit-text-stroke:0.3px #3d53d6;">In-House Production</span>
<span class="t" style="left:1363.75px;top:566.03px;font-size:12px;line-height:16px;color:#374151;letter-spacing:-0.969px;-webkit-text-stroke:0.2px #374151;">0.1</span>
<span class="t" style="left:1466.81px;top:566.03px;font-size:12px;line-height:16px;color:#8f959f;-webkit-text-stroke:0.1px #8f959f;">0</span>
<span class="t" style="left:1506.81px;top:566.03px;font-size:12px;line-height:16px;color:#5468d6;-webkit-text-stroke:0.3px #5468d6;">1</span>
<span class="t" style="left:1579.81px;top:566.03px;font-size:12px;line-height:16px;color:#e03b3b;-webkit-text-stroke:0.3px #e03b3b;">1</span>
<span class="t" style="left:1639.81px;top:566.03px;font-size:12px;line-height:16px;color:#374151;-webkit-text-stroke:0.2px #374151;">0</span>
<span class="t" style="left:1708.81px;top:566.03px;font-size:12px;line-height:16px;color:#374151;-webkit-text-stroke:0.2px #374151;">0</span>
<span class="t" style="left:1775.81px;top:566.03px;font-size:12px;line-height:16px;color:#374151;-webkit-text-stroke:0.2px #374151;">0</span>
<span class="t" style="left:1855.31px;top:566.03px;font-size:12px;line-height:16px;color:#374151;-webkit-text-stroke:0.2px #374151;">1</span>
<div class="b" style="left:263.00px;top:607.65px;width:1700.00px;height:66.65px;background:#eff4fc;"></div>
<div class="b" style="left:263.00px;top:607.65px;width:4.00px;height:66.65px;background:#3f7df6;"></div>
<div class="b" style="left:262.00px;top:607.65px;width:1.00px;height:66.65px;background:#3f7df6;opacity:.5;"></div>
<div class="b" style="left:267.00px;top:673.00px;width:1700.00px;height:1.00px;background:#5a93f4;opacity:0.70;"></div>
<div class="b" style="left:267.00px;top:674.00px;width:1700.00px;height:1.00px;background:#5a93f4;opacity:0.30;"></div>
<span class="t" style="left:273.50px;top:615.97px;font-size:12px;line-height:16px;color:#1e293b;letter-spacing:-0.092px;-webkit-text-stroke:0.3px #1e293b;">12102725</span>
<span class="t" style="left:273.50px;top:633.47px;font-size:10.7px;line-height:14px;color:#949ba7;letter-spacing:0.025px;">Item: 10</span>
<span class="t" style="left:273.50px;top:649.52px;font-size:10.7px;line-height:14px;color:#949ba7;letter-spacing:0.260px;">MAT-140180</span>
<svg style="left:360px;top:617.57px" width="9" height="10" viewBox="0 0 9 10"><path d="M0.3 0.4v9.2L8.6 5z" fill="#5b6472"/></svg>
<span class="t" style="left:374.25px;top:615.27px;font-size:12px;line-height:16px;color:#24357f;font-weight:700;letter-spacing:0.557px;">MAT-165289</span>
<div class="b" style="left:457.40px;top:612.32px;width:65.50px;height:22.35px;background:#00a63e;border-radius:4.5px;"></div>
<svg style="left:469.20px;top:619.57px" width="12.1" height="9.3" viewBox="0 0 13 10"><path d="M3.0 3.3h6.8L6.4 6.4z" fill="#18224e"/><rect x="5.45" y="0" width="1.9" height="4.7" fill="#d9263f"/><rect x="0.45" y="5.35" width="12.1" height="3.9" rx="0.8" fill="#d4e3ff" stroke="#18224e" stroke-width="0.9"/><rect x="1.6" y="6.3" width="9.8" height="1.2" fill="#9dbcf5"/></svg>
<span class="t" style="left:487.40px;top:615.87px;font-size:11px;line-height:15px;color:#f4fff8;letter-spacing:-0.177px;-webkit-text-stroke:0.25px #f4fff8;">Excel</span>
<span class="t" style="left:374.25px;top:635.47px;font-size:10.7px;line-height:14px;color:#4a5fd8;letter-spacing:0.434px;-webkit-text-stroke:0.3px #4a5fd8;">In-House Production</span>
<span class="t" style="left:374.25px;top:653.77px;font-size:10.7px;line-height:14px;color:#949ba7;letter-spacing:0.385px;">22 components required</span>
<span class="t" style="left:557.50px;top:632.22px;font-size:12.5px;line-height:17px;color:#1e293b;letter-spacing:-0.102px;-webkit-text-stroke:0.3px #1e293b;">Cable Gland – Brass M25</span>
<div class="b" style="left:785.00px;top:612.87px;width:233.80px;height:9.00px;background:#00c853;border-radius:4.5px;"></div>
<div class="b" style="left:785.20px;top:626.27px;width:56.80px;height:21.90px;background:#fde3e3;border:1px solid #f7a9a9;border-radius:4px;"></div>
<svg style="left:793.4px;top:632.47px" width="8" height="10" viewBox="0 0 8 10"><path d="M1.2 0.8L6.6 9.2M6.9 0.8C5 3.6 3 6.4 0.9 9.2" fill="none" stroke="#9b1c1c" stroke-width="1.35" stroke-linecap="round"/></svg>
<span class="t" style="left:805.00px;top:629.57px;font-size:11px;line-height:15px;color:#9b1c1c;font-weight:700;letter-spacing:0.467px;">22/22</span>
<span class="t" style="left:785.50px;top:654.07px;font-size:10px;line-height:14px;color:#949ba7;letter-spacing:0.032px;">100% available</span>
<span class="t" style="left:1057.50px;top:632.67px;font-size:12px;line-height:16px;color:#374151;letter-spacing:-1.094px;-webkit-text-stroke:0.2px #374151;">EAC</span>
<span class="t" style="left:1047.31px;top:632.67px;font-size:12px;line-height:16px;color:#374151;-webkit-text-stroke:0.2px #374151;">1</span>
<span class="t" style="left:1195.31px;top:632.67px;font-size:12px;line-height:16px;color:#374151;-webkit-text-stroke:0.2px #374151;">2</span>

<div class="b" style="left:1215.50px;top:631.27px;width:119.30px;height:17.20px;background:#dbe8fb;border-radius:4px;"></div>
<span class="t" style="left:1222.00px;top:633.07px;font-size:10.7px;line-height:14px;color:#3d53d6;letter-spacing:0.476px;-webkit-text-stroke:0.3px #3d53d6;">In-House Production</span>
<span class="t" style="left:1363.75px;top:632.67px;font-size:12px;line-height:16px;color:#374151;letter-spacing:-0.969px;-webkit-text-stroke:0.2px #374151;">0.1</span>
<span class="t" style="left:1466.81px;top:632.67px;font-size:12px;line-height:16px;color:#8f959f;-webkit-text-stroke:0.1px #8f959f;">0</span>
<span class="t" style="left:1506.81px;top:632.67px;font-size:12px;line-height:16px;color:#8f959f;-webkit-text-stroke:0.1px #8f959f;">0</span>
<span class="t" style="left:1579.81px;top:632.67px;font-size:12px;line-height:16px;color:#e03b3b;-webkit-text-stroke:0.3px #e03b3b;">2</span>
<span class="t" style="left:1639.81px;top:632.67px;font-size:12px;line-height:16px;color:#374151;-webkit-text-stroke:0.2px #374151;">0</span>
<span class="t" style="left:1708.81px;top:632.67px;font-size:12px;line-height:16px;color:#374151;-webkit-text-stroke:0.2px #374151;">0</span>
<span class="t" style="left:1775.81px;top:632.67px;font-size:12px;line-height:16px;color:#374151;-webkit-text-stroke:0.2px #374151;">0</span>
<span class="t" style="left:1855.31px;top:632.67px;font-size:12px;line-height:16px;color:#374151;-webkit-text-stroke:0.2px #374151;">0</span>
<div class="b" style="left:263.00px;top:674.30px;width:1700.00px;height:66.65px;background:#eff4fc;"></div>
<div class="b" style="left:263.00px;top:674.30px;width:4.00px;height:66.65px;background:#3f7df6;"></div>
<div class="b" style="left:262.00px;top:674.30px;width:1.00px;height:66.65px;background:#3f7df6;opacity:.5;"></div>
<div class="b" style="left:267.00px;top:739.00px;width:1700.00px;height:1.00px;background:#5a93f4;opacity:0.05;"></div>
<div class="b" style="left:267.00px;top:740.00px;width:1700.00px;height:1.00px;background:#5a93f4;opacity:0.95;"></div>
<span class="t" style="left:273.50px;top:682.62px;font-size:12px;line-height:16px;color:#1e293b;letter-spacing:-0.092px;-webkit-text-stroke:0.3px #1e293b;">12102725</span>
<span class="t" style="left:273.50px;top:700.12px;font-size:10.7px;line-height:14px;color:#949ba7;letter-spacing:0.025px;">Item: 10</span>
<span class="t" style="left:273.50px;top:716.17px;font-size:10.7px;line-height:14px;color:#949ba7;letter-spacing:0.260px;">MAT-140180</span>
<svg style="left:360px;top:684.23px" width="9" height="10" viewBox="0 0 9 10"><path d="M0.3 0.4v9.2L8.6 5z" fill="#5b6472"/></svg>
<span class="t" style="left:374.25px;top:681.92px;font-size:12px;line-height:16px;color:#24357f;font-weight:700;letter-spacing:0.263px;">MAT-138125</span>
<div class="b" style="left:454.30px;top:678.98px;width:65.50px;height:22.35px;background:#00a63e;border-radius:4.5px;"></div>
<svg style="left:466.10px;top:686.23px" width="12.1" height="9.3" viewBox="0 0 13 10"><path d="M3.0 3.3h6.8L6.4 6.4z" fill="#18224e"/><rect x="5.45" y="0" width="1.9" height="4.7" fill="#d9263f"/><rect x="0.45" y="5.35" width="12.1" height="3.9" rx="0.8" fill="#d4e3ff" stroke="#18224e" stroke-width="0.9"/><rect x="1.6" y="6.3" width="9.8" height="1.2" fill="#9dbcf5"/></svg>
<span class="t" style="left:484.30px;top:682.52px;font-size:11px;line-height:15px;color:#f4fff8;letter-spacing:-0.177px;-webkit-text-stroke:0.25px #f4fff8;">Excel</span>
<span class="t" style="left:374.25px;top:702.12px;font-size:10.7px;line-height:14px;color:#4a5fd8;letter-spacing:0.434px;-webkit-text-stroke:0.3px #4a5fd8;">In-House Production</span>
<span class="t" style="left:374.25px;top:720.42px;font-size:10.7px;line-height:14px;color:#949ba7;letter-spacing:0.386px;">5 components required</span>
<span class="t" style="left:557.50px;top:698.88px;font-size:12.5px;line-height:17px;color:#1e293b;letter-spacing:-0.118px;-webkit-text-stroke:0.3px #1e293b;">Temperature Sensor – RTD PT100</span>
<div class="b" style="left:785.00px;top:679.52px;width:233.80px;height:9.00px;background:#00c853;border-radius:4.5px;"></div>
<div class="b" style="left:785.20px;top:692.92px;width:42.80px;height:21.90px;background:#dcfbe6;border:1px solid #8eeab0;border-radius:4px;"></div>
<svg style="left:793px;top:699.12px" width="9" height="10" viewBox="0 0 9 10"><path d="M1 5.6l2.1 2.9L7.6 0.9" fill="none" stroke="#176b3a" stroke-width="1.5" stroke-linecap="round" stroke-linejoin="round"/></svg>
<span class="t" style="left:803.90px;top:696.23px;font-size:11px;line-height:15px;color:#176b3a;font-weight:700;letter-spacing:0.302px;">5/5</span>
<span class="t" style="left:785.50px;top:720.73px;font-size:10px;line-height:14px;color:#949ba7;letter-spacing:0.032px;">100% available</span>
<span class="t" style="left:1057.50px;top:699.33px;font-size:12px;line-height:16px;color:#374151;letter-spacing:-1.094px;-webkit-text-stroke:0.2px #374151;">EAC</span>
<span class="t" style="left:1047.31px;top:699.33px;font-size:12px;line-height:16px;color:#374151;-webkit-text-stroke:0.2px #374151;">2</span>
<span class="t" style="left:1195.31px;top:699.33px;font-size:12px;line-height:16px;color:#374151;-webkit-text-stroke:0.2px #374151;">4</span>

<div class="b" style="left:1215.50px;top:697.92px;width:119.30px;height:17.20px;background:#dbe8fb;border-radius:4px;"></div>
<span class="t" style="left:1222.00px;top:699.73px;font-size:10.7px;line-height:14px;color:#3d53d6;letter-spacing:0.476px;-webkit-text-stroke:0.3px #3d53d6;">In-House Production</span>
<span class="t" style="left:1363.75px;top:699.33px;font-size:12px;line-height:16px;color:#374151;letter-spacing:-0.969px;-webkit-text-stroke:0.2px #374151;">0.1</span>
<span class="t" style="left:1466.81px;top:699.33px;font-size:12px;line-height:16px;color:#8f959f;-webkit-text-stroke:0.1px #8f959f;">0</span>
<span class="t" style="left:1506.81px;top:699.33px;font-size:12px;line-height:16px;color:#5468d6;-webkit-text-stroke:0.3px #5468d6;">4</span>
<span class="t" style="left:1579.81px;top:699.33px;font-size:12px;line-height:16px;color:#1fa653;-webkit-text-stroke:0.3px #1fa653;">0</span>
<span class="t" style="left:1639.81px;top:699.33px;font-size:12px;line-height:16px;color:#374151;-webkit-text-stroke:0.2px #374151;">0</span>
<span class="t" style="left:1708.81px;top:699.33px;font-size:12px;line-height:16px;color:#374151;-webkit-text-stroke:0.2px #374151;">0</span>
<span class="t" style="left:1775.81px;top:699.33px;font-size:12px;line-height:16px;color:#374151;-webkit-text-stroke:0.2px #374151;">0</span>
<span class="t" style="left:1855.31px;top:699.33px;font-size:12px;line-height:16px;color:#374151;-webkit-text-stroke:0.2px #374151;">0</span>
<div class="b" style="left:263.00px;top:740.95px;width:1700.00px;height:66.65px;background:#eff4fc;"></div>
<div class="b" style="left:263.00px;top:740.95px;width:4.00px;height:66.65px;background:#3f7df6;"></div>
<div class="b" style="left:262.00px;top:740.95px;width:1.00px;height:66.65px;background:#3f7df6;opacity:.5;"></div>
<div class="b" style="left:267.00px;top:806.00px;width:1700.00px;height:1.00px;background:#5a93f4;opacity:0.40;"></div>
<div class="b" style="left:267.00px;top:807.00px;width:1700.00px;height:1.00px;background:#5a93f4;opacity:0.60;"></div>
<span class="t" style="left:273.50px;top:749.28px;font-size:12px;line-height:16px;color:#1e293b;letter-spacing:-0.092px;-webkit-text-stroke:0.3px #1e293b;">12102725</span>
<span class="t" style="left:273.50px;top:766.78px;font-size:10.7px;line-height:14px;color:#949ba7;letter-spacing:0.025px;">Item: 10</span>
<span class="t" style="left:273.50px;top:782.83px;font-size:10.7px;line-height:14px;color:#949ba7;letter-spacing:0.260px;">MAT-140180</span>
<svg style="left:360px;top:750.88px" width="9" height="10" viewBox="0 0 9 10"><path d="M0.3 0.4v9.2L8.6 5z" fill="#5b6472"/></svg>
<span class="t" style="left:374.25px;top:748.58px;font-size:12px;line-height:16px;color:#24357f;font-weight:700;letter-spacing:0.318px;">MAT-138126</span>
<div class="b" style="left:454.30px;top:745.63px;width:65.50px;height:22.35px;background:#00a63e;border-radius:4.5px;"></div>
<svg style="left:466.10px;top:752.88px" width="12.1" height="9.3" viewBox="0 0 13 10"><path d="M3.0 3.3h6.8L6.4 6.4z" fill="#18224e"/><rect x="5.45" y="0" width="1.9" height="4.7" fill="#d9263f"/><rect x="0.45" y="5.35" width="12.1" height="3.9" rx="0.8" fill="#d4e3ff" stroke="#18224e" stroke-width="0.9"/><rect x="1.6" y="6.3" width="9.8" height="1.2" fill="#9dbcf5"/></svg>
<span class="t" style="left:484.30px;top:749.18px;font-size:11px;line-height:15px;color:#f4fff8;letter-spacing:-0.177px;-webkit-text-stroke:0.25px #f4fff8;">Excel</span>
<span class="t" style="left:374.25px;top:768.78px;font-size:10.7px;line-height:14px;color:#4a5fd8;letter-spacing:0.434px;-webkit-text-stroke:0.3px #4a5fd8;">In-House Production</span>
<span class="t" style="left:374.25px;top:787.08px;font-size:10.7px;line-height:14px;color:#949ba7;letter-spacing:0.401px;">4 components required</span>
<span class="t" style="left:557.50px;top:765.53px;font-size:12.5px;line-height:17px;color:#1e293b;letter-spacing:-0.111px;-webkit-text-stroke:0.3px #1e293b;">Coupling Guard – MS</span>
<div class="b" style="left:785.00px;top:746.18px;width:233.80px;height:9.00px;background:#00c853;border-radius:4.5px;"></div>
<div class="b" style="left:785.20px;top:759.58px;width:144.30px;height:21.90px;background:#dcfbe6;border:1px solid #8eeab0;border-radius:4px;"></div>
<svg style="left:793px;top:765.78px" width="9" height="10" viewBox="0 0 9 10"><path d="M1 5.6l2.1 2.9L7.6 0.9" fill="none" stroke="#176b3a" stroke-width="1.5" stroke-linecap="round" stroke-linejoin="round"/></svg>
<span class="t" style="left:803.90px;top:762.88px;font-size:11px;line-height:15px;color:#176b3a;font-weight:700;letter-spacing:-0.129px;">Finished Part Available</span>
<span class="t" style="left:936.00px;top:763.38px;font-size:10.7px;line-height:14px;color:#1f9d50;letter-spacing:0.467px;-webkit-text-stroke:0.3px #1f9d50;">5 reserved</span>
<span class="t" style="left:785.50px;top:787.38px;font-size:10px;line-height:14px;color:#949ba7;letter-spacing:0.213px;">Production order finished - part in stock</span>
<span class="t" style="left:1057.50px;top:765.98px;font-size:12px;line-height:16px;color:#374151;letter-spacing:-1.094px;-webkit-text-stroke:0.2px #374151;">EAC</span>
<span class="t" style="left:1047.31px;top:765.98px;font-size:12px;line-height:16px;color:#374151;-webkit-text-stroke:0.2px #374151;">4</span>
<span class="t" style="left:1195.31px;top:765.98px;font-size:12px;line-height:16px;color:#374151;-webkit-text-stroke:0.2px #374151;">8</span>

<div class="b" style="left:1215.50px;top:764.58px;width:119.30px;height:17.20px;background:#dbe8fb;border-radius:4px;"></div>
<span class="t" style="left:1222.00px;top:766.38px;font-size:10.7px;line-height:14px;color:#3d53d6;letter-spacing:0.476px;-webkit-text-stroke:0.3px #3d53d6;">In-House Production</span>
<span class="t" style="left:1363.75px;top:765.98px;font-size:12px;line-height:16px;color:#374151;letter-spacing:-0.969px;-webkit-text-stroke:0.2px #374151;">0.1</span>
<span class="t" style="left:1466.81px;top:765.98px;font-size:12px;line-height:16px;color:#1fa653;-webkit-text-stroke:0.3px #1fa653;">5</span>
<span class="t" style="left:1506.81px;top:765.98px;font-size:12px;line-height:16px;color:#5468d6;-webkit-text-stroke:0.3px #5468d6;">3</span>
<span class="t" style="left:1579.81px;top:765.98px;font-size:12px;line-height:16px;color:#1fa653;-webkit-text-stroke:0.3px #1fa653;">0</span>
<span class="t" style="left:1639.81px;top:765.98px;font-size:12px;line-height:16px;color:#374151;-webkit-text-stroke:0.2px #374151;">0</span>
<span class="t" style="left:1708.81px;top:765.98px;font-size:12px;line-height:16px;color:#374151;-webkit-text-stroke:0.2px #374151;">0</span>
<span class="t" style="left:1775.81px;top:765.98px;font-size:12px;line-height:16px;color:#374151;-webkit-text-stroke:0.2px #374151;">0</span>
<span class="t" style="left:1855.31px;top:765.98px;font-size:12px;line-height:16px;color:#374151;-webkit-text-stroke:0.2px #374151;">0</span>
<div class="b" style="left:263.00px;top:807.60px;width:1700.00px;height:66.65px;background:#eff4fc;"></div>
<div class="b" style="left:263.00px;top:807.60px;width:4.00px;height:66.65px;background:#3f7df6;"></div>
<div class="b" style="left:262.00px;top:807.60px;width:1.00px;height:66.65px;background:#3f7df6;opacity:.5;"></div>
<div class="b" style="left:267.00px;top:873.00px;width:1700.00px;height:1.00px;background:#5a93f4;opacity:0.75;"></div>
<div class="b" style="left:267.00px;top:874.00px;width:1700.00px;height:1.00px;background:#5a93f4;opacity:0.25;"></div>
<span class="t" style="left:273.50px;top:815.92px;font-size:12px;line-height:16px;color:#1e293b;letter-spacing:-0.092px;-webkit-text-stroke:0.3px #1e293b;">12102725</span>
<span class="t" style="left:273.50px;top:833.42px;font-size:10.7px;line-height:14px;color:#949ba7;letter-spacing:0.025px;">Item: 10</span>
<span class="t" style="left:273.50px;top:849.47px;font-size:10.7px;line-height:14px;color:#949ba7;letter-spacing:0.260px;">MAT-140180</span>
<svg style="left:360px;top:817.52px" width="9" height="10" viewBox="0 0 9 10"><path d="M0.3 0.4v9.2L8.6 5z" fill="#5b6472"/></svg>
<span class="t" style="left:374.25px;top:815.22px;font-size:12px;line-height:16px;color:#24357f;font-weight:700;letter-spacing:0.318px;">MAT-138128</span>
<div class="b" style="left:454.30px;top:812.27px;width:65.50px;height:22.35px;background:#00a63e;border-radius:4.5px;"></div>
<svg style="left:466.10px;top:819.52px" width="12.1" height="9.3" viewBox="0 0 13 10"><path d="M3.0 3.3h6.8L6.4 6.4z" fill="#18224e"/><rect x="5.45" y="0" width="1.9" height="4.7" fill="#d9263f"/><rect x="0.45" y="5.35" width="12.1" height="3.9" rx="0.8" fill="#d4e3ff" stroke="#18224e" stroke-width="0.9"/><rect x="1.6" y="6.3" width="9.8" height="1.2" fill="#9dbcf5"/></svg>
<span class="t" style="left:484.30px;top:815.82px;font-size:11px;line-height:15px;color:#f4fff8;letter-spacing:-0.177px;-webkit-text-stroke:0.25px #f4fff8;">Excel</span>
<span class="t" style="left:374.25px;top:835.42px;font-size:10.7px;line-height:14px;color:#4a5fd8;letter-spacing:0.434px;-webkit-text-stroke:0.3px #4a5fd8;">In-House Production</span>
<span class="t" style="left:374.25px;top:853.72px;font-size:10.7px;line-height:14px;color:#949ba7;letter-spacing:0.401px;">3 components required</span>
<span class="t" style="left:557.50px;top:832.17px;font-size:12.5px;line-height:17px;color:#1e293b;letter-spacing:-0.123px;-webkit-text-stroke:0.3px #1e293b;">Bearing Bracket – DE Side</span>
<div class="b" style="left:785.00px;top:812.82px;width:233.80px;height:9.00px;background:#00c853;border-radius:4.5px;"></div>
<div class="b" style="left:785.20px;top:826.22px;width:43.60px;height:21.90px;background:#dcfbe6;border:1px solid #8eeab0;border-radius:4px;"></div>
<svg style="left:793px;top:832.42px" width="9" height="10" viewBox="0 0 9 10"><path d="M1 5.6l2.1 2.9L7.6 0.9" fill="none" stroke="#176b3a" stroke-width="1.5" stroke-linecap="round" stroke-linejoin="round"/></svg>
<span class="t" style="left:803.90px;top:829.52px;font-size:11px;line-height:15px;color:#176b3a;font-weight:700;letter-spacing:0.702px;">3/3</span>
<span class="t" style="left:785.50px;top:854.02px;font-size:10px;line-height:14px;color:#949ba7;letter-spacing:0.032px;">100% available</span>
<span class="t" style="left:1057.50px;top:832.62px;font-size:12px;line-height:16px;color:#374151;letter-spacing:-1.094px;-webkit-text-stroke:0.2px #374151;">EAC</span>
<span class="t" style="left:1047.31px;top:832.62px;font-size:12px;line-height:16px;color:#374151;-webkit-text-stroke:0.2px #374151;">1</span>
<span class="t" style="left:1195.31px;top:832.62px;font-size:12px;line-height:16px;color:#374151;-webkit-text-stroke:0.2px #374151;">2</span>

<div class="b" style="left:1215.50px;top:831.22px;width:119.30px;height:17.20px;background:#dbe8fb;border-radius:4px;"></div>
<span class="t" style="left:1222.00px;top:833.02px;font-size:10.7px;line-height:14px;color:#3d53d6;letter-spacing:0.476px;-webkit-text-stroke:0.3px #3d53d6;">In-House Production</span>
<span class="t" style="left:1363.75px;top:832.62px;font-size:12px;line-height:16px;color:#374151;letter-spacing:-0.969px;-webkit-text-stroke:0.2px #374151;">0.1</span>
<span class="t" style="left:1466.81px;top:832.62px;font-size:12px;line-height:16px;color:#8f959f;-webkit-text-stroke:0.1px #8f959f;">0</span>
<span class="t" style="left:1506.81px;top:832.62px;font-size:12px;line-height:16px;color:#5468d6;-webkit-text-stroke:0.3px #5468d6;">2</span>
<span class="t" style="left:1579.81px;top:832.62px;font-size:12px;line-height:16px;color:#1fa653;-webkit-text-stroke:0.3px #1fa653;">0</span>
<span class="t" style="left:1639.81px;top:832.62px;font-size:12px;line-height:16px;color:#374151;-webkit-text-stroke:0.2px #374151;">0</span>
<span class="t" style="left:1708.81px;top:832.62px;font-size:12px;line-height:16px;color:#374151;-webkit-text-stroke:0.2px #374151;">0</span>
<span class="t" style="left:1775.81px;top:832.62px;font-size:12px;line-height:16px;color:#374151;-webkit-text-stroke:0.2px #374151;">0</span>
<span class="t" style="left:1855.31px;top:832.62px;font-size:12px;line-height:16px;color:#374151;-webkit-text-stroke:0.2px #374151;">0</span>
<div class="b" style="left:263.00px;top:874.25px;width:1700.00px;height:66.65px;background:#eff4fc;"></div>
<div class="b" style="left:263.00px;top:874.25px;width:4.00px;height:66.65px;background:#3f7df6;"></div>
<div class="b" style="left:262.00px;top:874.25px;width:1.00px;height:66.65px;background:#3f7df6;opacity:.5;"></div>
<div class="b" style="left:267.00px;top:939.00px;width:1700.00px;height:1.00px;background:#5a93f4;opacity:0.10;"></div>
<div class="b" style="left:267.00px;top:940.00px;width:1700.00px;height:1.00px;background:#5a93f4;opacity:0.90;"></div>
<span class="t" style="left:273.50px;top:882.58px;font-size:12px;line-height:16px;color:#1e293b;letter-spacing:-0.092px;-webkit-text-stroke:0.3px #1e293b;">12102725</span>
<span class="t" style="left:273.50px;top:900.08px;font-size:10.7px;line-height:14px;color:#949ba7;letter-spacing:0.025px;">Item: 10</span>
<span class="t" style="left:273.50px;top:916.12px;font-size:10.7px;line-height:14px;color:#949ba7;letter-spacing:0.260px;">MAT-140180</span>
<svg style="left:360px;top:884.18px" width="9" height="10" viewBox="0 0 9 10"><path d="M0.3 0.4v9.2L8.6 5z" fill="#5b6472"/></svg>
<span class="t" style="left:374.25px;top:881.88px;font-size:12px;line-height:16px;color:#24357f;font-weight:700;letter-spacing:0.263px;">MAT-135531</span>
<div class="b" style="left:454.30px;top:878.93px;width:65.50px;height:22.35px;background:#00a63e;border-radius:4.5px;"></div>
<svg style="left:466.10px;top:886.18px" width="12.1" height="9.3" viewBox="0 0 13 10"><path d="M3.0 3.3h6.8L6.4 6.4z" fill="#18224e"/><rect x="5.45" y="0" width="1.9" height="4.7" fill="#d9263f"/><rect x="0.45" y="5.35" width="12.1" height="3.9" rx="0.8" fill="#d4e3ff" stroke="#18224e" stroke-width="0.9"/><rect x="1.6" y="6.3" width="9.8" height="1.2" fill="#9dbcf5"/></svg>
<span class="t" style="left:484.30px;top:882.48px;font-size:11px;line-height:15px;color:#f4fff8;letter-spacing:-0.177px;-webkit-text-stroke:0.25px #f4fff8;">Excel</span>
<span class="t" style="left:374.25px;top:902.08px;font-size:10.7px;line-height:14px;color:#4a5fd8;letter-spacing:0.434px;-webkit-text-stroke:0.3px #4a5fd8;">In-House Production</span>
<span class="t" style="left:374.25px;top:920.38px;font-size:10.7px;line-height:14px;color:#949ba7;letter-spacing:0.282px;">1 component required</span>
<span class="t" style="left:557.50px;top:898.83px;font-size:12.5px;line-height:17px;color:#1e293b;letter-spacing:-0.067px;-webkit-text-stroke:0.3px #1e293b;">Hex Bolt – M10 × 40 mm</span>
<div class="b" style="left:785.00px;top:879.48px;width:233.80px;height:9.00px;background:#00c853;border-radius:4.5px;"></div>
<div class="b" style="left:785.20px;top:892.88px;width:39.70px;height:21.90px;background:#fde3e3;border:1px solid #f7a9a9;border-radius:4px;"></div>
<svg style="left:793.4px;top:899.08px" width="8" height="10" viewBox="0 0 8 10"><path d="M1.2 0.8L6.6 9.2M6.9 0.8C5 3.6 3 6.4 0.9 9.2" fill="none" stroke="#9b1c1c" stroke-width="1.35" stroke-linecap="round"/></svg>
<span class="t" style="left:805.00px;top:896.18px;font-size:11px;line-height:15px;color:#9b1c1c;font-weight:700;letter-spacing:-1.498px;">1/1</span>
<span class="t" style="left:785.50px;top:920.68px;font-size:10px;line-height:14px;color:#949ba7;letter-spacing:0.032px;">100% available</span>
<span class="t" style="left:1057.50px;top:899.28px;font-size:12px;line-height:16px;color:#374151;letter-spacing:-1.094px;-webkit-text-stroke:0.2px #374151;">EAC</span>
<span class="t" style="left:1047.31px;top:899.28px;font-size:12px;line-height:16px;color:#374151;-webkit-text-stroke:0.2px #374151;">1</span>
<span class="t" style="left:1195.31px;top:899.28px;font-size:12px;line-height:16px;color:#374151;-webkit-text-stroke:0.2px #374151;">2</span>

<div class="b" style="left:1215.50px;top:897.88px;width:119.30px;height:17.20px;background:#dbe8fb;border-radius:4px;"></div>
<span class="t" style="left:1222.00px;top:899.68px;font-size:10.7px;line-height:14px;color:#3d53d6;letter-spacing:0.476px;-webkit-text-stroke:0.3px #3d53d6;">In-House Production</span>
<span class="t" style="left:1363.75px;top:899.28px;font-size:12px;line-height:16px;color:#374151;letter-spacing:-0.969px;-webkit-text-stroke:0.2px #374151;">0.1</span>
<span class="t" style="left:1466.81px;top:899.28px;font-size:12px;line-height:16px;color:#8f959f;-webkit-text-stroke:0.1px #8f959f;">0</span>
<span class="t" style="left:1506.81px;top:899.28px;font-size:12px;line-height:16px;color:#8f959f;-webkit-text-stroke:0.1px #8f959f;">0</span>
<span class="t" style="left:1579.81px;top:899.28px;font-size:12px;line-height:16px;color:#e03b3b;-webkit-text-stroke:0.3px #e03b3b;">2</span>
<span class="t" style="left:1639.81px;top:899.28px;font-size:12px;line-height:16px;color:#374151;-webkit-text-stroke:0.2px #374151;">0</span>
<span class="t" style="left:1708.81px;top:899.28px;font-size:12px;line-height:16px;color:#374151;-webkit-text-stroke:0.2px #374151;">0</span>
<span class="t" style="left:1775.81px;top:899.28px;font-size:12px;line-height:16px;color:#374151;-webkit-text-stroke:0.2px #374151;">0</span>
<span class="t" style="left:1855.31px;top:899.28px;font-size:12px;line-height:16px;color:#374151;-webkit-text-stroke:0.2px #374151;">2</span>
<div class="b" style="left:263.00px;top:940.90px;width:1700.00px;height:66.65px;background:#eff4fc;"></div>
<div class="b" style="left:263.00px;top:940.90px;width:4.00px;height:66.65px;background:#3f7df6;"></div>
<div class="b" style="left:262.00px;top:940.90px;width:1.00px;height:66.65px;background:#3f7df6;opacity:.5;"></div>
<div class="b" style="left:267.00px;top:1006.00px;width:1700.00px;height:1.00px;background:#5a93f4;opacity:0.45;"></div>
<div class="b" style="left:267.00px;top:1007.00px;width:1700.00px;height:1.00px;background:#5a93f4;opacity:0.55;"></div>
<span class="t" style="left:273.50px;top:949.23px;font-size:12px;line-height:16px;color:#1e293b;letter-spacing:-0.092px;-webkit-text-stroke:0.3px #1e293b;">12102725</span>
<span class="t" style="left:273.50px;top:966.73px;font-size:10.7px;line-height:14px;color:#949ba7;letter-spacing:0.025px;">Item: 10</span>
<span class="t" style="left:273.50px;top:982.78px;font-size:10.7px;line-height:14px;color:#949ba7;letter-spacing:0.260px;">MAT-140180</span>
<svg style="left:360px;top:950.83px" width="9" height="10" viewBox="0 0 9 10"><path d="M0.3 0.4v9.2L8.6 5z" fill="#5b6472"/></svg>
<span class="t" style="left:374.25px;top:948.53px;font-size:12px;line-height:16px;color:#24357f;font-weight:700;letter-spacing:0.557px;">MAT-135532</span>
<div class="b" style="left:456.50px;top:945.58px;width:65.50px;height:22.35px;background:#00a63e;border-radius:4.5px;"></div>
<svg style="left:468.30px;top:952.83px" width="12.1" height="9.3" viewBox="0 0 13 10"><path d="M3.0 3.3h6.8L6.4 6.4z" fill="#18224e"/><rect x="5.45" y="0" width="1.9" height="4.7" fill="#d9263f"/><rect x="0.45" y="5.35" width="12.1" height="3.9" rx="0.8" fill="#d4e3ff" stroke="#18224e" stroke-width="0.9"/><rect x="1.6" y="6.3" width="9.8" height="1.2" fill="#9dbcf5"/></svg>
<span class="t" style="left:486.50px;top:949.13px;font-size:11px;line-height:15px;color:#f4fff8;letter-spacing:-0.177px;-webkit-text-stroke:0.25px #f4fff8;">Excel</span>
<span class="t" style="left:374.25px;top:968.73px;font-size:10.7px;line-height:14px;color:#4a5fd8;letter-spacing:0.434px;-webkit-text-stroke:0.3px #4a5fd8;">In-House Production</span>
<span class="t" style="left:374.25px;top:987.03px;font-size:10.7px;line-height:14px;color:#949ba7;letter-spacing:0.282px;">1 component required</span>
<span class="t" style="left:557.50px;top:965.48px;font-size:12.5px;line-height:17px;color:#1e293b;letter-spacing:-0.229px;-webkit-text-stroke:0.3px #1e293b;">Pump Base Frame – MS</span>
<div class="b" style="left:785.00px;top:946.13px;width:233.80px;height:9.00px;background:#00c853;border-radius:4.5px;"></div>
<div class="b" style="left:785.20px;top:959.53px;width:144.30px;height:21.90px;background:#dcfbe6;border:1px solid #8eeab0;border-radius:4px;"></div>
<svg style="left:793px;top:965.73px" width="9" height="10" viewBox="0 0 9 10"><path d="M1 5.6l2.1 2.9L7.6 0.9" fill="none" stroke="#176b3a" stroke-width="1.5" stroke-linecap="round" stroke-linejoin="round"/></svg>
<span class="t" style="left:803.90px;top:962.83px;font-size:11px;line-height:15px;color:#176b3a;font-weight:700;letter-spacing:-0.129px;">Finished Part Available</span>
<span class="t" style="left:936.00px;top:963.33px;font-size:10.7px;line-height:14px;color:#1f9d50;letter-spacing:0.467px;-webkit-text-stroke:0.3px #1f9d50;">4 reserved</span>
<span class="t" style="left:785.50px;top:987.33px;font-size:10px;line-height:14px;color:#949ba7;letter-spacing:0.213px;">Production order finished - part in stock</span>
<span class="t" style="left:1057.50px;top:965.93px;font-size:12px;line-height:16px;color:#374151;letter-spacing:-1.094px;-webkit-text-stroke:0.2px #374151;">EAC</span>
<span class="t" style="left:1047.31px;top:965.93px;font-size:12px;line-height:16px;color:#374151;-webkit-text-stroke:0.2px #374151;">2</span>
<span class="t" style="left:1195.31px;top:965.93px;font-size:12px;line-height:16px;color:#374151;-webkit-text-stroke:0.2px #374151;">4</span>

<div class="b" style="left:1215.50px;top:964.53px;width:119.30px;height:17.20px;background:#dbe8fb;border-radius:4px;"></div>
<span class="t" style="left:1222.00px;top:966.33px;font-size:10.7px;line-height:14px;color:#3d53d6;letter-spacing:0.476px;-webkit-text-stroke:0.3px #3d53d6;">In-House Production</span>
<span class="t" style="left:1363.75px;top:965.93px;font-size:12px;line-height:16px;color:#374151;letter-spacing:-0.969px;-webkit-text-stroke:0.2px #374151;">0.1</span>
<span class="t" style="left:1466.81px;top:965.93px;font-size:12px;line-height:16px;color:#1fa653;-webkit-text-stroke:0.3px #1fa653;">4</span>
<span class="t" style="left:1506.81px;top:965.93px;font-size:12px;line-height:16px;color:#8f959f;-webkit-text-stroke:0.1px #8f959f;">0</span>
<span class="t" style="left:1579.81px;top:965.93px;font-size:12px;line-height:16px;color:#1fa653;-webkit-text-stroke:0.3px #1fa653;">0</span>
<span class="t" style="left:1639.81px;top:965.93px;font-size:12px;line-height:16px;color:#374151;-webkit-text-stroke:0.2px #374151;">0</span>
<span class="t" style="left:1708.81px;top:965.93px;font-size:12px;line-height:16px;color:#374151;-webkit-text-stroke:0.2px #374151;">0</span>
<span class="t" style="left:1775.81px;top:965.93px;font-size:12px;line-height:16px;color:#374151;-webkit-text-stroke:0.2px #374151;">0</span>
<span class="t" style="left:1855.31px;top:965.93px;font-size:12px;line-height:16px;color:#374151;-webkit-text-stroke:0.2px #374151;">0</span>
<div class="b" style="left:263.00px;top:1007.55px;width:1700.00px;height:66.65px;background:#eff4fc;"></div>
<div class="b" style="left:263.00px;top:1007.55px;width:4.00px;height:66.65px;background:#3f7df6;"></div>
<div class="b" style="left:262.00px;top:1007.55px;width:1.00px;height:66.65px;background:#3f7df6;opacity:.5;"></div>
<div class="b" style="left:267.00px;top:1073.00px;width:1700.00px;height:1.00px;background:#5a93f4;opacity:0.80;"></div>
<div class="b" style="left:267.00px;top:1074.00px;width:1700.00px;height:1.00px;background:#5a93f4;opacity:0.20;"></div>
<span class="t" style="left:273.50px;top:1015.88px;font-size:12px;line-height:16px;color:#1e293b;letter-spacing:-0.092px;-webkit-text-stroke:0.3px #1e293b;">12102725</span>
<span class="t" style="left:273.50px;top:1033.38px;font-size:10.7px;line-height:14px;color:#949ba7;letter-spacing:0.025px;">Item: 10</span>
<span class="t" style="left:273.50px;top:1049.42px;font-size:10.7px;line-height:14px;color:#949ba7;letter-spacing:0.260px;">MAT-140180</span>
<svg style="left:360px;top:1017.48px" width="9" height="10" viewBox="0 0 9 10"><path d="M0.3 0.4v9.2L8.6 5z" fill="#5b6472"/></svg>
<span class="t" style="left:374.25px;top:1015.17px;font-size:12px;line-height:16px;color:#24357f;font-weight:700;letter-spacing:0.507px;">MAT-136759</span>
<div class="b" style="left:456.50px;top:1012.23px;width:65.50px;height:22.35px;background:#00a63e;border-radius:4.5px;"></div>
<svg style="left:468.30px;top:1019.48px" width="12.1" height="9.3" viewBox="0 0 13 10"><path d="M3.0 3.3h6.8L6.4 6.4z" fill="#18224e"/><rect x="5.45" y="0" width="1.9" height="4.7" fill="#d9263f"/><rect x="0.45" y="5.35" width="12.1" height="3.9" rx="0.8" fill="#d4e3ff" stroke="#18224e" stroke-width="0.9"/><rect x="1.6" y="6.3" width="9.8" height="1.2" fill="#9dbcf5"/></svg>
<span class="t" style="left:486.50px;top:1015.77px;font-size:11px;line-height:15px;color:#f4fff8;letter-spacing:-0.177px;-webkit-text-stroke:0.25px #f4fff8;">Excel</span>
<span class="t" style="left:374.25px;top:1035.38px;font-size:10.7px;line-height:14px;color:#4a5fd8;letter-spacing:0.434px;-webkit-text-stroke:0.3px #4a5fd8;">In-House Production</span>
<span class="t" style="left:374.25px;top:1053.67px;font-size:10.7px;line-height:14px;color:#949ba7;letter-spacing:0.401px;">2 components required</span>
<span class="t" style="left:557.50px;top:1032.12px;font-size:12.5px;line-height:17px;color:#1e293b;letter-spacing:0.067px;-webkit-text-stroke:0.3px #1e293b;">Pressure Switch – Adjustable</span>
<div class="b" style="left:785.00px;top:1012.77px;width:233.80px;height:9.00px;background:#00c853;border-radius:4.5px;"></div>
<div class="b" style="left:785.20px;top:1026.17px;width:42.80px;height:21.90px;background:#dcfbe6;border:1px solid #8eeab0;border-radius:4px;"></div>
<svg style="left:793px;top:1032.38px" width="9" height="10" viewBox="0 0 9 10"><path d="M1 5.6l2.1 2.9L7.6 0.9" fill="none" stroke="#176b3a" stroke-width="1.5" stroke-linecap="round" stroke-linejoin="round"/></svg>
<span class="t" style="left:803.90px;top:1029.47px;font-size:11px;line-height:15px;color:#176b3a;font-weight:700;letter-spacing:0.302px;">2/2</span>
<span class="t" style="left:785.50px;top:1053.97px;font-size:10px;line-height:14px;color:#949ba7;letter-spacing:0.032px;">100% available</span>
<span class="t" style="left:1057.50px;top:1032.58px;font-size:12px;line-height:16px;color:#374151;letter-spacing:-1.094px;-webkit-text-stroke:0.2px #374151;">EAC</span>
<span class="t" style="left:1047.31px;top:1032.58px;font-size:12px;line-height:16px;color:#374151;-webkit-text-stroke:0.2px #374151;">1</span>
<span class="t" style="left:1195.31px;top:1032.58px;font-size:12px;line-height:16px;color:#374151;-webkit-text-stroke:0.2px #374151;">2</span>

<div class="b" style="left:1215.50px;top:1031.17px;width:119.30px;height:17.20px;background:#dbe8fb;border-radius:4px;"></div>
<span class="t" style="left:1222.00px;top:1032.97px;font-size:10.7px;line-height:14px;color:#3d53d6;letter-spacing:0.476px;-webkit-text-stroke:0.3px #3d53d6;">In-House Production</span>
<span class="t" style="left:1363.75px;top:1032.58px;font-size:12px;line-height:16px;color:#374151;letter-spacing:-0.969px;-webkit-text-stroke:0.2px #374151;">0.1</span>
<span class="t" style="left:1466.81px;top:1032.58px;font-size:12px;line-height:16px;color:#8f959f;-webkit-text-stroke:0.1px #8f959f;">0</span>
<span class="t" style="left:1506.81px;top:1032.58px;font-size:12px;line-height:16px;color:#5468d6;-webkit-text-stroke:0.3px #5468d6;">2</span>
<span class="t" style="left:1579.81px;top:1032.58px;font-size:12px;line-height:16px;color:#1fa653;-webkit-text-stroke:0.3px #1fa653;">0</span>
<span class="t" style="left:1639.81px;top:1032.58px;font-size:12px;line-height:16px;color:#374151;-webkit-text-stroke:0.2px #374151;">0</span>
<span class="t" style="left:1708.81px;top:1032.58px;font-size:12px;line-height:16px;color:#374151;-webkit-text-stroke:0.2px #374151;">0</span>
<span class="t" style="left:1775.81px;top:1032.58px;font-size:12px;line-height:16px;color:#374151;-webkit-text-stroke:0.2px #374151;">0</span>
<span class="t" style="left:1855.31px;top:1032.58px;font-size:12px;line-height:16px;color:#374151;-webkit-text-stroke:0.2px #374151;">0</span>
<div class="b" style="left:263.00px;top:1074.20px;width:1700.00px;height:66.65px;background:#eff4fc;"></div>
<div class="b" style="left:263.00px;top:1074.20px;width:4.00px;height:66.65px;background:#3f7df6;"></div>
<div class="b" style="left:262.00px;top:1074.20px;width:1.00px;height:66.65px;background:#3f7df6;opacity:.5;"></div>
<div class="b" style="left:267.00px;top:1139.00px;width:1700.00px;height:1.00px;background:#5a93f4;opacity:0.15;"></div>
<div class="b" style="left:267.00px;top:1140.00px;width:1700.00px;height:1.00px;background:#5a93f4;opacity:0.85;"></div>
<span class="t" style="left:273.50px;top:1082.53px;font-size:12px;line-height:16px;color:#1e293b;letter-spacing:-0.092px;-webkit-text-stroke:0.3px #1e293b;">12102725</span>
<span class="t" style="left:273.50px;top:1100.03px;font-size:10.7px;line-height:14px;color:#949ba7;letter-spacing:0.025px;">Item: 10</span>
<span class="t" style="left:273.50px;top:1116.08px;font-size:10.7px;line-height:14px;color:#949ba7;letter-spacing:0.260px;">MAT-140180</span>
<svg style="left:360px;top:1084.12px" width="9" height="10" viewBox="0 0 9 10"><path d="M0.3 0.4v9.2L8.6 5z" fill="#5b6472"/></svg>
<span class="t" style="left:374.25px;top:1081.83px;font-size:12px;line-height:16px;color:#24357f;font-weight:700;letter-spacing:0.507px;">MAT-136760</span>
<div class="b" style="left:456.50px;top:1078.88px;width:65.50px;height:22.35px;background:#00a63e;border-radius:4.5px;"></div>
<svg style="left:468.30px;top:1086.12px" width="12.1" height="9.3" viewBox="0 0 13 10"><path d="M3.0 3.3h6.8L6.4 6.4z" fill="#18224e"/><rect x="5.45" y="0" width="1.9" height="4.7" fill="#d9263f"/><rect x="0.45" y="5.35" width="12.1" height="3.9" rx="0.8" fill="#d4e3ff" stroke="#18224e" stroke-width="0.9"/><rect x="1.6" y="6.3" width="9.8" height="1.2" fill="#9dbcf5"/></svg>
<span class="t" style="left:486.50px;top:1082.43px;font-size:11px;line-height:15px;color:#f4fff8;letter-spacing:-0.177px;-webkit-text-stroke:0.25px #f4fff8;">Excel</span>
<span class="t" style="left:374.25px;top:1102.03px;font-size:10.7px;line-height:14px;color:#4a5fd8;letter-spacing:0.434px;-webkit-text-stroke:0.3px #4a5fd8;">In-House Production</span>
<span class="t" style="left:374.25px;top:1120.33px;font-size:10.7px;line-height:14px;color:#949ba7;letter-spacing:0.401px;">2 components required</span>
<span class="t" style="left:557.50px;top:1098.78px;font-size:12.5px;line-height:17px;color:#1e293b;letter-spacing:0.073px;-webkit-text-stroke:0.3px #1e293b;">Gasket Set</span>
<div class="b" style="left:785.00px;top:1079.43px;width:233.80px;height:9.00px;background:#00c853;border-radius:4.5px;"></div>
<div class="b" style="left:785.20px;top:1092.83px;width:42.80px;height:21.90px;background:#dcfbe6;border:1px solid #8eeab0;border-radius:4px;"></div>
<svg style="left:793px;top:1099.03px" width="9" height="10" viewBox="0 0 9 10"><path d="M1 5.6l2.1 2.9L7.6 0.9" fill="none" stroke="#176b3a" stroke-width="1.5" stroke-linecap="round" stroke-linejoin="round"/></svg>
<span class="t" style="left:803.90px;top:1096.12px;font-size:11px;line-height:15px;color:#176b3a;font-weight:700;letter-spacing:0.302px;">2/2</span>
<span class="t" style="left:785.50px;top:1120.62px;font-size:10px;line-height:14px;color:#949ba7;letter-spacing:0.032px;">100% available</span>
<span class="t" style="left:1057.50px;top:1099.23px;font-size:12px;line-height:16px;color:#374151;letter-spacing:-1.094px;-webkit-text-stroke:0.2px #374151;">EAC</span>
<span class="t" style="left:1047.31px;top:1099.23px;font-size:12px;line-height:16px;color:#374151;-webkit-text-stroke:0.2px #374151;">1</span>
<span class="t" style="left:1195.31px;top:1099.23px;font-size:12px;line-height:16px;color:#374151;-webkit-text-stroke:0.2px #374151;">2</span>

<div class="b" style="left:1215.50px;top:1097.83px;width:119.30px;height:17.20px;background:#dbe8fb;border-radius:4px;"></div>
<span class="t" style="left:1222.00px;top:1099.62px;font-size:10.7px;line-height:14px;color:#3d53d6;letter-spacing:0.476px;-webkit-text-stroke:0.3px #3d53d6;">In-House Production</span>
<span class="t" style="left:1363.75px;top:1099.23px;font-size:12px;line-height:16px;color:#374151;letter-spacing:-0.969px;-webkit-text-stroke:0.2px #374151;">0.1</span>
<span class="t" style="left:1466.81px;top:1099.23px;font-size:12px;line-height:16px;color:#8f959f;-webkit-text-stroke:0.1px #8f959f;">0</span>
<span class="t" style="left:1506.81px;top:1099.23px;font-size:12px;line-height:16px;color:#8f959f;-webkit-text-stroke:0.1px #8f959f;">0</span>
<span class="t" style="left:1579.81px;top:1099.23px;font-size:12px;line-height:16px;color:#1fa653;-webkit-text-stroke:0.3px #1fa653;">0</span>
<span class="t" style="left:1639.81px;top:1099.23px;font-size:12px;line-height:16px;color:#374151;-webkit-text-stroke:0.2px #374151;">0</span>
<span class="t" style="left:1708.81px;top:1099.23px;font-size:12px;line-height:16px;color:#374151;-webkit-text-stroke:0.2px #374151;">0</span>
<span class="t" style="left:1775.81px;top:1099.23px;font-size:12px;line-height:16px;color:#374151;-webkit-text-stroke:0.2px #374151;">0</span>
<span class="t" style="left:1855.31px;top:1099.23px;font-size:12px;line-height:16px;color:#374151;-webkit-text-stroke:0.2px #374151;">0</span>
<svg style="left:820px;top:236px;filter:blur(4.5px);" width="110" height="95" viewBox="820 236 110 95"><polygon points="836,272 882,254 906,288 856,314" fill="rgba(140,143,160,.33)"/></svg>
<svg style="left:820px;top:236px;filter:blur(1.5px);" width="110" height="95" viewBox="820 236 110 95"><polygon points="843.6,267 887.7,249.4 912.8,273 895.5,278 851.5,295.5" fill="#e3dba2" opacity=".8"/><polygon points="858,277 889,263 897,276 861,291" fill="#dfc552" opacity=".42"/><polygon points="851.5,296 895.5,278.5 907,284 864,303" fill="#dcd8b4" opacity=".75"/><path d="M852 295.6L895.5 278" stroke="#80796a" stroke-width="2.4" opacity=".75"/></svg>
</div>
</body></html>
